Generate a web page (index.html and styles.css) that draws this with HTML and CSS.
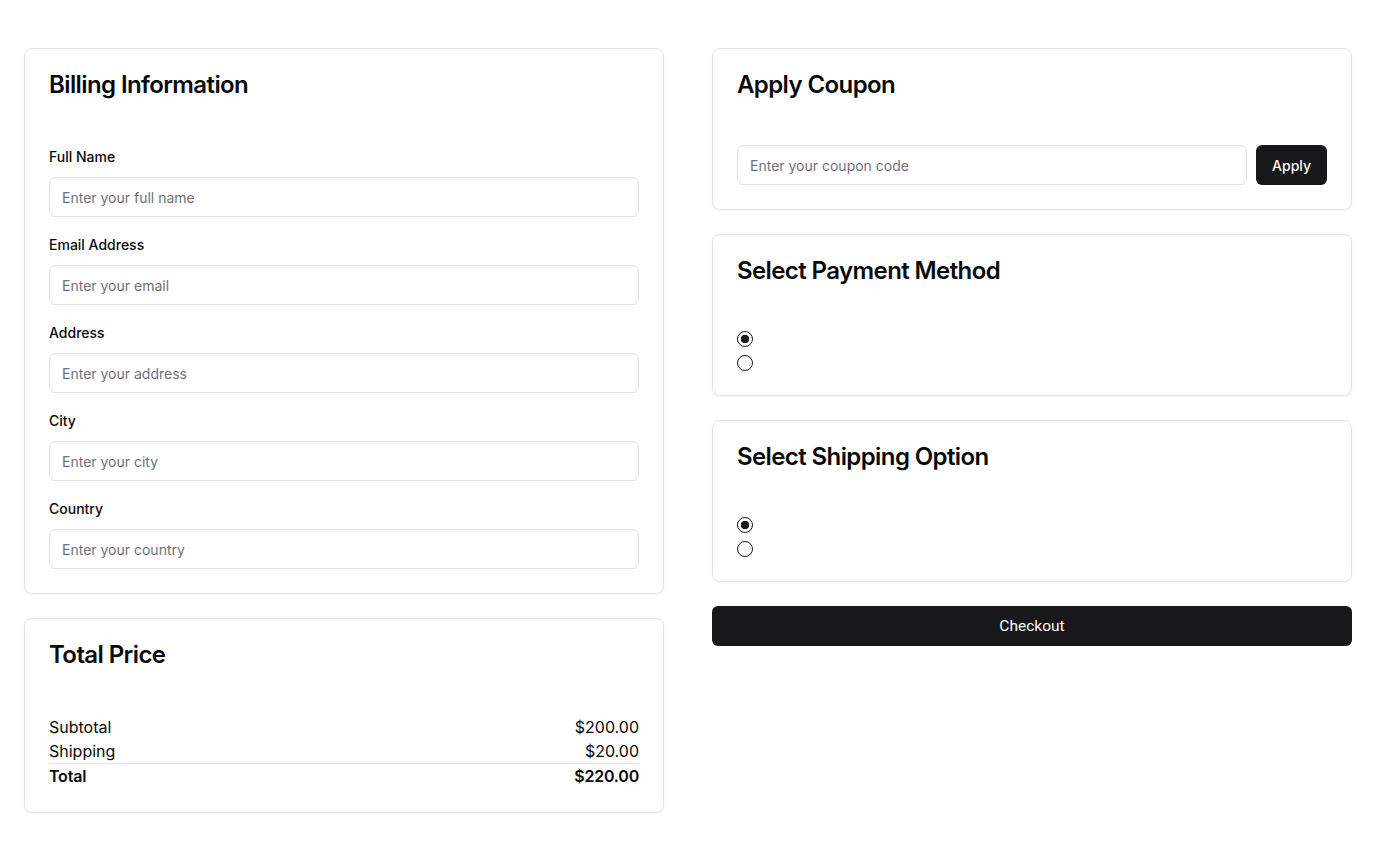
FILE: index.html
```html
<!DOCTYPE html>
<html lang="en">
<head>
<meta charset="utf-8">
<title>Checkout</title>
<link rel="stylesheet" href="styles.css">
</head>
<body>
<main class="page">
  <div class="column">
    <section class="card">
      <h2 class="card-title">Billing Information</h2>
      <form class="form">
        <div class="field">
          <label class="label">Full Name</label>
          <input class="input" type="text" placeholder="Enter your full name">
        </div>
        <div class="field">
          <label class="label">Email Address</label>
          <input class="input" type="email" placeholder="Enter your email">
        </div>
        <div class="field">
          <label class="label">Address</label>
          <input class="input" type="text" placeholder="Enter your address">
        </div>
        <div class="field">
          <label class="label">City</label>
          <input class="input" type="text" placeholder="Enter your city">
        </div>
        <div class="field">
          <label class="label">Country</label>
          <input class="input" type="text" placeholder="Enter your country">
        </div>
      </form>
    </section>
    <section class="card">
      <h2 class="card-title">Total Price</h2>
      <div class="totals">
        <div class="row"><span>Subtotal</span><span>$200.00</span></div>
        <div class="row"><span>Shipping</span><span>$20.00</span></div>
        <div class="row total"><span>Total</span><span>$220.00</span></div>
      </div>
    </section>
  </div>
  <div class="column">
    <section class="card">
      <h2 class="card-title">Apply Coupon</h2>
      <div class="coupon">
        <input class="input" type="text" placeholder="Enter your coupon code">
        <button class="btn" type="button">Apply</button>
      </div>
    </section>
    <section class="card">
      <h2 class="card-title">Select Payment Method</h2>
      <div class="radios">
        <input class="radio" type="radio" name="pay" checked>
        <input class="radio" type="radio" name="pay">
      </div>
    </section>
    <section class="card">
      <h2 class="card-title">Select Shipping Option</h2>
      <div class="radios">
        <input class="radio" type="radio" name="ship" checked>
        <input class="radio" type="radio" name="ship">
      </div>
    </section>
    <button class="btn btn-wide" type="button">Checkout</button>
  </div>
</main>
</body>
</html>
```
FILE: styles.css
```css
* { box-sizing: border-box; }
html, body { margin: 0; padding: 0; background: #ffffff; }
body {
  font-family: Inter, "Noto Sans", sans-serif;
  color: #09090b;
}
.page {
  display: grid;
  grid-template-columns: 640px 640px;
  column-gap: 48px;
  padding: 48px 24px;
  align-items: start;
}
.column {
  display: flex;
  flex-direction: column;
  gap: 24px;
}
.card {
  border: 1px solid #e4e4e7;
  border-radius: 8px;
  background: #fff;
  box-shadow: 0 1px 2px rgba(0,0,0,0.05);
  padding: 24px;
}
.card-title {
  margin: 0 0 48px;
  font-size: 24px;
  line-height: 24px;
  font-weight: 600;
  letter-spacing: -0.6px;
}
.form {
  display: flex;
  flex-direction: column;
  gap: 16px;
}
.field {
  display: flex;
  flex-direction: column;
  gap: 8px;
}
.label {
  font-size: 14px;
  line-height: 24px;
  font-weight: 500;
}
.input {
  height: 40px;
  width: 100%;
  border: 1px solid #e4e4e7;
  border-radius: 6px;
  padding: 0 12px;
  font-family: Inter, sans-serif;
  font-size: 14px;
  color: #09090b;
  background: #fff;
  outline: none;
}
.input::placeholder { color: #71717a; }
.totals {
  display: flex;
  flex-direction: column;
  font-size: 16px;
  line-height: 24px;
}
.row {
  display: flex;
  justify-content: space-between;
}
.row.total {
  border-top: 1px solid #e4e4e7;
  font-weight: 600;
  letter-spacing: -0.2px;
}
.coupon {
  display: flex;
  gap: 9px;
}
.btn {
  height: 40px;
  padding: 0 16px;
  border: none;
  border-radius: 6px;
  background: #18181b;
  color: #fafafa;
  font-family: Inter, sans-serif;
  font-size: 14px;
  font-weight: 500;
  flex-shrink: 0;
}
.btn-wide {
  width: 100%;
  font-family: Roboto, sans-serif;
  font-size: 15.5px;
  font-weight: 400;
}
.radios {
  display: flex;
  flex-direction: column;
  gap: 8px;
}
.radio {
  appearance: none;
  -webkit-appearance: none;
  margin: 0;
  width: 16px;
  height: 16px;
  border: 1px solid #18181b;
  border-radius: 50%;
  background: #fff;
}
.radio:checked {
  background: radial-gradient(circle, #18181b 0 4px, #fff 4.5px);
}
```
